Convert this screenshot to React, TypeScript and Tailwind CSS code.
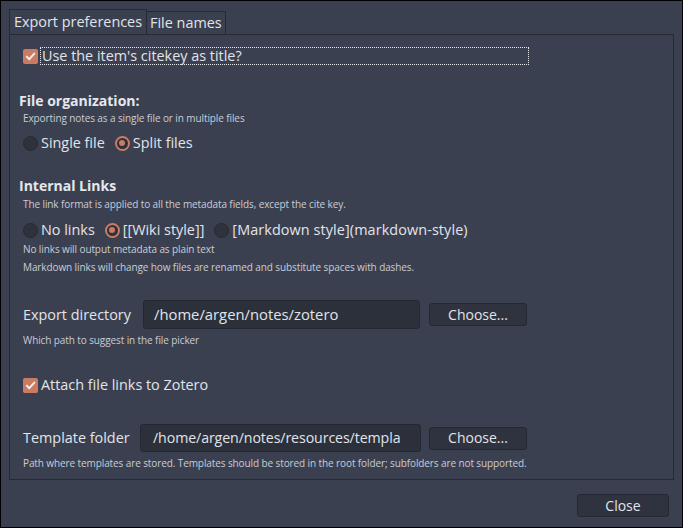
import React from "react";

const font = { fontFamily: '"Open Sans", "Noto Sans", "DejaVu Sans", sans-serif' };

const Checkbox = () => (
  <span className="flex h-[15px] w-[15px] shrink-0 items-center justify-center rounded-[2px] bg-[#c97c63]">
    <svg width="11" height="11" viewBox="0 0 11 11">
      <path d="M1.8 5.6 L4.3 8.2 L9.3 2.6" fill="none" stroke="#f4ede9" strokeWidth="2" strokeLinecap="round" strokeLinejoin="round" />
    </svg>
  </span>
);

const Radio = ({ checked, className = "" }: { checked?: boolean; className?: string }) =>
  checked ? (
    <span className={`flex h-[15px] w-[15px] shrink-0 items-center justify-center rounded-full border-2 border-[#c97c63] bg-[#2d313c] ${className}`}>
      <span className="block h-[6px] w-[6px] rounded-full bg-[#c97c63]" />
    </span>
  ) : (
    <span className={`block h-[15px] w-[15px] shrink-0 rounded-full border border-[#272a33] bg-[#2e323d] ${className}`} />
  );

const Sub = ({ children, className = "" }: { children: React.ReactNode; className?: string }) => (
  <div className={`ml-[13px] h-[14px] whitespace-nowrap text-[10px] leading-[14px] tracking-[-0.1px] text-[#c9cdd5] ${className}`}>{children}</div>
);

const Heading = ({ children, className = "" }: { children: React.ReactNode; className?: string }) => (
  <div className={`ml-[9px] h-[18px] text-[14px] font-bold leading-[18px] text-[#e4e7ec] ${className}`}>{children}</div>
);

const ChooseButton = ({ className = "" }: { className?: string }) => (
  <button className={`h-[23px] w-[98px] rounded-[3px] border border-[#252832] bg-[#2f333f] text-[14px] leading-[20px] text-[#e1e4ea] ${className}`}>
    Choose...
  </button>
);

export default function App() {
  return (
    <div style={font} className="flex h-[528px] w-[683px] flex-col border border-black bg-[#3b4050] text-[14.4px] text-[#e1e4ea]">
      <div className="flex items-end pl-[8px] pt-[8px]">
        <div className="flex h-[26px] items-center border border-[#272a33] px-[4px]">
          Export preferences
        </div>
        <div className="flex h-[24px] items-center border border-l-0 border-[#272a33] px-[3px]">
          File names
        </div>
      </div>
      <div className="mx-[8px] -mt-px flex h-[446px] flex-col border border-[#272a33]">
        <div className="ml-[13px] mt-[12px] flex h-[18px] items-center">
          <Checkbox />
          <span className="ml-[2px] flex h-[18px] w-[489px] items-center border border-dotted border-[#e8eaee] pl-px">
            Use the item's citekey as title?
          </span>
        </div>

        <Heading className="mt-[27px]">File organization:</Heading>
        <Sub className="mt-[1px]">Exporting notes as a single file or in multiple files</Sub>
        <div className="ml-[13px] mt-[9px] flex h-[18px] items-center">
          <Radio />
          <span className="ml-[3px]">Single file</span>
          <Radio checked className="ml-[10px]" />
          <span className="ml-[3px]">Split files</span>
        </div>

        <Heading className="mt-[25px]">Internal Links</Heading>
        <Sub className="mt-[2px]">The link format is applied to all the metadata fields, except the cite key.</Sub>
        <div className="ml-[13px] mt-[10px] flex h-[18px] items-center">
          <Radio />
          <span className="ml-[3px]">No links</span>
          <Radio checked className="ml-[10px]" />
          <span className="ml-[3px]">[[Wiki style]]</span>
          <Radio className="ml-[10px]" />
          <span className="ml-[3px] tracking-[0.1px]">[Markdown style](markdown-style)</span>
        </div>
        <Sub className="mt-[3px]">No links will output metadata as plain text</Sub>
        <Sub className="mt-[4px]">Markdown links will change how files are renamed and substitute spaces with dashes.</Sub>

        <div className="ml-[13px] mt-[26px] flex h-[29px] items-center">
          <span className="w-[120px]">Export directory</span>
          <div className="flex h-[29px] w-[277px] items-center rounded-[3px] border border-[#252832] bg-[#2c303b] pl-[10px] text-[14.8px]">
            /home/argen/notes/zotero
          </div>
          <ChooseButton className="ml-[9px]" />
        </div>
        <Sub className="mt-[4px]">Which path to suggest in the file picker</Sub>

        <div className="ml-[13px] mt-[29px] flex h-[18px] items-center">
          <Checkbox />
          <span className="ml-[3px]">Attach file links to Zotero</span>
        </div>

        <div className="ml-[13px] mt-[30px] flex h-[28px] items-center">
          <span className="w-[117px]">Template folder</span>
          <div className="flex h-[28px] w-[281px] items-center overflow-hidden whitespace-nowrap rounded-[3px] border border-[#252832] bg-[#2c303b] pl-[12px] text-[14.2px] tracking-[-0.1px]">
            /home/argen/notes/resources/templa
          </div>
          <ChooseButton className="ml-[8px]" />
        </div>
        <Sub className="mt-[4px]">
          Path where templates are stored. Templates should be stored in the root folder; subfolders are not supported.
        </Sub>
      </div>
      <div className="mr-[13px] mt-[14px] flex justify-end">
        <button className="h-[23px] w-[92px] rounded-[3px] border border-[#252832] bg-[#2f333f] text-[14px] leading-[20px] text-[#e1e4ea]">
          Close
        </button>
      </div>
    </div>
  );
}
